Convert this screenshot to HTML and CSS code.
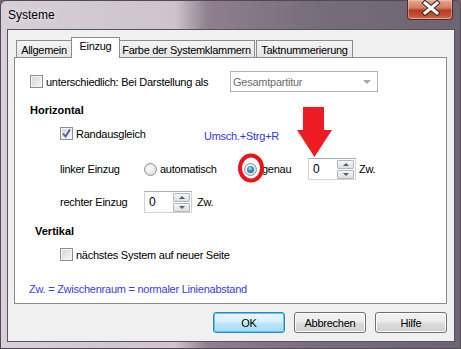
FILE: index.html
```html
<!DOCTYPE html>
<html lang="de">
<head>
    <meta charset="UTF-8">
    <title>Systeme</title>
    <link rel="stylesheet" href="styles.css">
</head>
<body>
    <div class="window">
      <div class="titlebar">
        <span class="title">Systeme</span>
        <div class="close">
          <svg width="46" height="20" viewBox="0 0 46 20">
            <path d="M17 4 L29 14 M29 4 L17 14" stroke="#3a2a28" stroke-width="5" stroke-linecap="square"/>
            <path d="M17 4 L29 14 M29 4 L17 14" stroke="#ffffff" stroke-width="3" stroke-linecap="square"/>
          </svg>
        </div>
      </div>

      <div class="client">
        <div class="tabs">
          <div class="tab tab-allg">Allgemein</div>
          <div class="tab tab-einzug active">Einzug</div>
          <div class="tab tab-farbe">Farbe der Systemklammern</div>
          <div class="tab tab-takt">Taktnummerierung</div>
        </div>

        <div class="panel">
          <div class="row row-display">
            <label class="check check-wide"><span class="box"></span>unterschiedlich: Bei Darstellung als</label>
            <div class="combo">Gesamtpartitur<span class="combo-arrow"></span></div>
          </div>

          <div class="heading heading-h">Horizontal</div>

          <div class="row row-rand">
            <label class="check check-rand">
              <span class="box">
                <svg width="11" height="11" viewBox="0 0 11 11"><path d="M2 5.5 L4.5 8.5 L9 1.5" stroke="#4a5f97" stroke-width="1.8" fill="none"/></svg>
              </span>Randausgleich
            </label>
            <span class="hint">Umsch.+Strg+R</span>
          </div>

          <div class="row row-linker">
            <span class="label">linker Einzug</span>
            <label class="radio radio-auto"><span class="dot"></span>automatisch</label>
            <label class="radio radio-exact"><span class="dot on"></span>genau</label>
            <div class="spin">
              <span class="spin-value">0</span>
              <div class="spin-btns">
                <span class="spin-btn up"></span>
                <span class="spin-btn down"></span>
              </div>
            </div>
            <span class="unit">Zw.</span>
          </div>

          <div class="row row-rechter">
            <span class="label">rechter Einzug</span>
            <div class="spin">
              <span class="spin-value">0</span>
              <div class="spin-btns">
                <span class="spin-btn up"></span>
                <span class="spin-btn down"></span>
              </div>
            </div>
            <span class="unit unit-r">Zw.</span>
          </div>

          <div class="heading heading-v">Vertikal</div>

          <div class="row row-next">
            <label class="check"><span class="box"></span>nächstes System auf neuer Seite</label>
          </div>

          <div class="note">Zw. = Zwischenraum = normaler Linienabstand</div>

          <!-- red markings drawn over the dialog -->
          <svg class="mark-arrow" width="36" height="51" viewBox="0 0 36 51">
            <polygon points="6,0 27,0 27,23 35,23 17.5,50 0,23 6,23" fill="#ed1c24"/>
          </svg>
          <svg class="mark-circle" width="28" height="30" viewBox="0 0 28 30">
            <ellipse cx="14" cy="15" rx="11" ry="12.5" stroke="#e8141c" stroke-width="4" fill="none"/>
          </svg>
        </div>

        <div class="buttons">
          <button class="btn btn-default">OK</button>
          <button class="btn">Abbrechen</button>
          <button class="btn">Hilfe</button>
        </div>
      </div>
    </div>
</body>
</html>
```

FILE: styles.css
```css
body {
  margin: 0;
  background: #6e6470;
  font-family: 'Liberation Sans', Arial, sans-serif;
  font-size: 11px;
  color: #000;
}

.window {
  width: 461px;
  height: 349px;
  box-sizing: border-box;
  border: 1px solid #4f4a54;
  border-radius: 6px 6px 0 0;
  padding: 0 5px 6px 6px;
  display: flex;
  flex-direction: column;
  background: linear-gradient(to right, #d8cfd9 0%, #cdc2ce 38%, #8e808e 45%, #776c7a 70%, #6c6472 100%);
}

.titlebar {
  height: 28px;
  display: flex;
  justify-content: space-between;
  align-items: flex-start;
}

.title {
  font-size: 12px;
  margin: 7px 0 0 1px;
  text-shadow: 0 0 6px rgba(255, 255, 255, 0.9);
}

.close {
  width: 46px;
  height: 20px;
  margin-top: -1px;
  margin-right: 2px;
  box-sizing: border-box;
  border: 1px solid #5a2c26;
  border-top: none;
  border-radius: 0 0 4px 4px;
  background: linear-gradient(#e6a592 0%, #d3806a 40%, #b83c24 55%, #c4533a 85%, #d87a5e 100%);
  box-shadow: inset 0 0 0 1px rgba(255, 220, 210, 0.4);
}

.close svg {
  display: block;
  margin-top: -1px;
}

.client {
  flex: 1;
  background: #f0f0f0;
  border: 1px solid #57535c;
  padding: 7px 7px 0 6px;
  display: flex;
  flex-direction: column;
}

.tabs {
  display: flex;
  align-items: flex-end;
  height: 20px;
  padding-left: 2px;
}

.tab {
  height: 17px;
  box-sizing: border-box;
  border: 1px solid #898c95;
  border-bottom: none;
  background: linear-gradient(#f4f4f4, #e4e4e4);
  display: flex;
  align-items: center;
  justify-content: center;
  letter-spacing: -0.3px;
  padding-top: 1px;
}

.tab-allg { width: 56px; }
.tab-einzug { width: 48px; }
.tab-farbe { width: 137px; margin-left: -1px; }
.tab-takt { width: 97px; margin-left: 1px; }

.tab.active {
  height: 21px;
  margin-bottom: -1px;
  margin-left: -1px;
  margin-right: -1px;
  width: 49px;
  background: #fff;
  position: relative;
  z-index: 2;
  padding-top: 0;
  padding-bottom: 4px;
}

.panel {
  position: relative;
  height: 247px;
  box-sizing: border-box;
  border: 1px solid #898c95;
  background: #fff;
  padding-left: 15px;
  letter-spacing: -0.25px;
}

.row {
  display: flex;
  align-items: center;
  height: 21px;
}

.row-display { margin-top: 13px; }
.row-rand { margin-top: 6px; padding-left: 30px; }
.row-linker { margin-top: 14px; padding-left: 30px; height: 22px; }
.row-rechter { margin-top: 11px; padding-left: 30px; height: 22px; }
.row-next { margin-top: 6px; padding-left: 30px; }

.heading {
  font-weight: bold;
  line-height: 14px;
  letter-spacing: 0;
}

.heading-h { margin-top: 11px; }
.heading-v { margin-top: 11px; padding-left: 5px; }

.check {
  display: flex;
  align-items: center;
  gap: 3px;
}

.check-wide { width: 200px; }
.check-rand { width: 144px; }

.box {
  width: 13px;
  height: 13px;
  box-sizing: border-box;
  border: 1px solid #8e8f8f;
  background: linear-gradient(135deg, #d4d4d4, #f8f8f8);
  box-shadow: inset 0 0 0 1px #f4f4f4;
  display: flex;
  align-items: center;
  justify-content: center;
}

.combo {
  width: 148px;
  height: 21px;
  box-sizing: border-box;
  border: 1px solid #adb2b5;
  background: #fff;
  color: #6d6d6d;
  display: flex;
  align-items: center;
  justify-content: space-between;
  padding: 0 6px 0 2px;
}

.combo-arrow {
  width: 0;
  height: 0;
  border-left: 4px solid transparent;
  border-right: 4px solid transparent;
  border-top: 4px solid #a8a8a8;
}

.hint {
  color: #3636dc;
  padding-top: 5px;
}

.label { width: 84px; }

.radio {
  display: flex;
  align-items: center;
  gap: 3px;
}

.radio-auto { width: 100px; }
.radio-exact { width: 64px; gap: 5px; }

.dot {
  width: 13px;
  height: 13px;
  box-sizing: border-box;
  border-radius: 50%;
  border: 1px solid #8e8f8f;
  background: radial-gradient(circle at 40% 40%, #ffffff, #d0d0d0);
  display: flex;
  align-items: center;
  justify-content: center;
}

.dot.on::after {
  content: "";
  width: 7px;
  height: 7px;
  border-radius: 50%;
  background: radial-gradient(circle at 45% 35%, #9fe0fb 0%, #2f8fd0 45%, #0d4f8a 100%);
}

.spin {
  width: 48px;
  height: 22px;
  box-sizing: border-box;
  border: 1px solid #d0d4da;
  border-top-color: #abadb3;
  background: #fff;
  display: flex;
  align-items: center;
  padding: 1px 1px 1px 4px;
}

.spin-value {
  flex: 1;
  font-size: 12px;
}

.spin-btns {
  display: flex;
  flex-direction: column;
  gap: 1px;
}

.spin-btn {
  width: 17px;
  height: 9px;
  box-sizing: border-box;
  border: 1px solid #b3b6bc;
  border-radius: 1px;
  background: linear-gradient(#f6f6f6, #dedede);
  display: flex;
  align-items: center;
  justify-content: center;
}

.spin-btn::after {
  content: "";
  width: 0;
  height: 0;
  border-left: 3px solid transparent;
  border-right: 3px solid transparent;
}

.spin-btn.up::after { border-bottom: 3px solid #4d5b7c; }
.spin-btn.down::after { border-top: 3px solid #4d5b7c; }

.unit { margin-left: 3px; }
.unit-r { margin-left: 5px; }

.note {
  color: #3c3cdc;
  line-height: 14px;
  margin-top: 17px;
  margin-left: -1px;
}

.mark-arrow {
  position: absolute;
  left: 282px;
  top: 49px;
}

.mark-circle {
  position: absolute;
  left: 222px;
  top: 95px;
}

.buttons {
  display: flex;
  justify-content: flex-end;
  gap: 9px;
  margin-top: 8px;
}

.btn {
  width: 72px;
  height: 21px;
  border: 1px solid #707070;
  border-radius: 3px;
  background: linear-gradient(#f2f2f2 0%, #ebebeb 48%, #dddddd 52%, #cfcfcf 100%);
  box-shadow: inset 0 0 0 1px #fcfcfc;
  font-family: 'Liberation Sans', Arial, sans-serif;
  font-size: 11px;
  letter-spacing: -0.25px;
  padding: 0;
  color: #000;
}

.btn-default {
  border-color: #3c7fb1;
  background: linear-gradient(#eaf6fd 0%, #d9f0fc 48%, #bee6fd 52%, #a7d9f5 100%);
  box-shadow: inset 0 0 0 1px #48d0fb;
}
```
